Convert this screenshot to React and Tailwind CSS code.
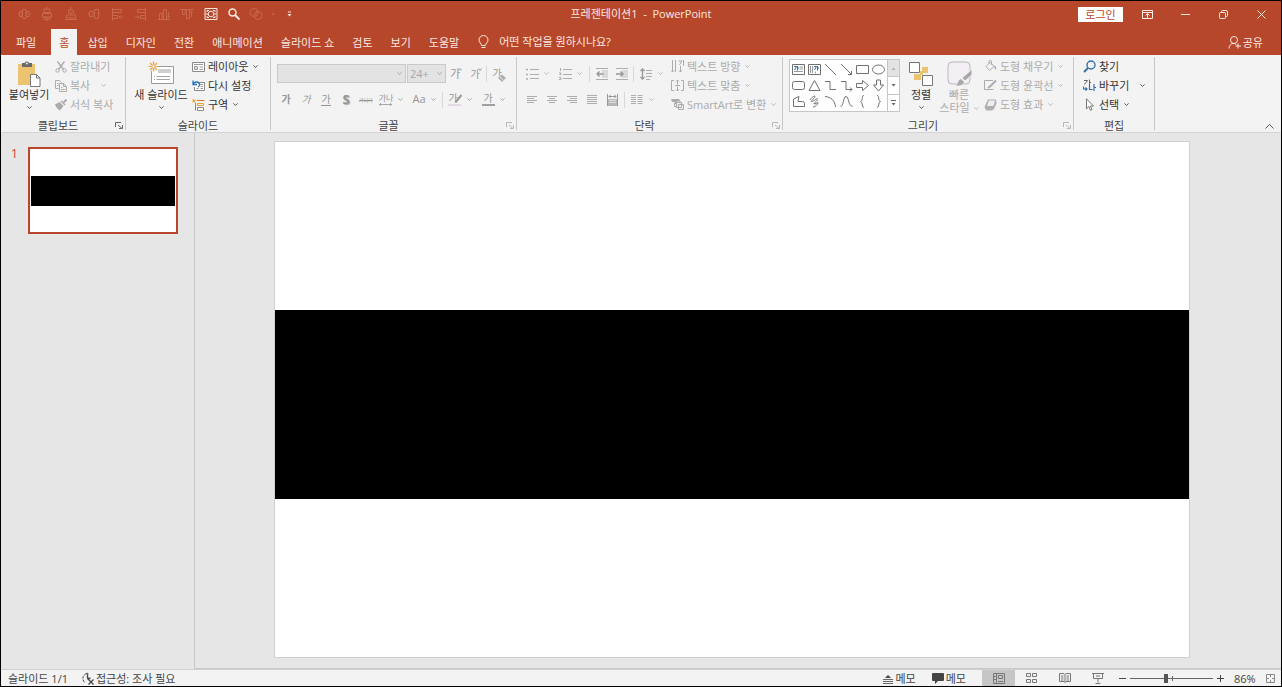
import React from "react";

/* ---------- shared pieces ---------- */

function Icon({ w = 14, h = w, vb, className = "", children }) {
  return (
    <svg
      width={w}
      height={h}
      viewBox={vb || `0 0 ${w} ${h}`}
      fill="none"
      stroke="currentColor"
      strokeWidth="1"
      aria-hidden="true"
      className={`shrink-0 ${className}`}
    >
      {children}
    </svg>
  );
}

const Chevron = ({ className = "" }) => (
  <Icon w={5} h={3} className={className}>
    <path d="M.4.4 2.5 2.4 4.6.4" strokeWidth=".8" />
  </Icon>
);

function Group({ label, launcher, muted, className, children }) {
  return (
    <section aria-label={label} className={`flex shrink-0 flex-col border-r border-[#c8c8c8] ${className}`}>
      <div className="flex h-[62px]">{children}</div>
      <div className="flex h-[11px] items-center">
        <span className="flex-1 pt-px text-center leading-[11px] text-[#444]">{label}</span>
        {launcher && (
          <button
            type="button"
            aria-label={`${label} 옵션`}
            className={`flex w-[10px] justify-start ${muted ? "text-[#b8b8b8]" : "text-[#666]"}`}
          >
            <Icon w={8}>
              <path d="M.5 6V1.500H6M3 4l4 3.500M7.500 4v3.500H4" />
            </Icon>
          </button>
        )}
      </div>
    </section>
  );
}

function Row({ icon, text, arrow, wide, disabled }) {
  return (
    <button
      type="button"
      className={`flex h-[19px] items-center gap-[3px] whitespace-nowrap ${disabled ? "text-[#ababab]" : "text-[#333]"}`}
    >
      {icon}
      <span className="pt-[2px]">{text}</span>
      {arrow && <Chevron className={wide ? "ml-2" : "ml-[2px]"} />}
    </button>
  );
}

function Big({ icon, text, className, children }) {
  return (
    <button type="button" className={`flex flex-col items-center whitespace-nowrap pt-1 ${className}`}>
      <span className="flex h-[26px] items-center">{icon}</span>
      <span className="leading-[16px]">{text}</span>
      {children || <Chevron className="mt-[3px]" />}
    </button>
  );
}

const Tool = ({ label, children }) => (
  <button type="button" aria-label={label} className="flex h-[19px] w-5 shrink-0 items-center justify-center">
    {children}
  </button>
);

const Split = ({ label, children }) => (
  <button type="button" aria-label={label} className="mr-[5px] flex h-[19px] shrink-0 items-center">
    <span className="flex w-5 items-center justify-center">{children}</span>
    <span className="flex w-2 justify-center">
      <Chevron />
    </span>
  </button>
);

const Rule = () => <span className="mr-[2px] h-4 w-px shrink-0 bg-[#d8d8d8]" />;

/* ---------- title bar ---------- */

const quick = [
  ["가운데 맞춤", <path d="M1 7h1.500M5 7h.5M9 7h.5M12 7h2M2.500 4.500h2.500v5H2.500zM5.500 2.500h3.500v9H5.500zM9.500 4.500H12v5H9.500z" />],
  ["중간 맞춤", <path d="M7 0v2M7 5.500v1M7 10v4M4 2h6v3.500H4zM2.500 6.500h9V10h-9zM4 10.500h6v2H4z" />],
  ["세로 가운데", <path d="M7 0v3M4.500 3h5v3h-5zM2.500 8h9v3h-9zM7 6v2M1 12.500h12" />],
  ["가로 가운데", <path d="M1 7h1.500M11.500 7H13M2.500 4.500H6v5H2.500zM7.500 2.500h4v9h-4z" />],
  ["왼쪽 맞춤", <path d="M2.500.500v13M2.500 2.500h9v3h-9zM2.500 8.500h5v3h-5zM9 10h4M10.500 8.500 9 10l1.500 1.500" />],
  ["오른쪽 맞춤", <path d="M11.500.500v13M11.500 2.500h-8v3h8zM11.500 8.500h-5v3h5zM1 10h4M3.500 8.500 5 10l-1.500 1.500" />],
  ["아래쪽 맞춤", <path d="M.500 12.500h13M2.500 6.500h2.500v6H2.500zM6.500 2.500h3v10h-3zM11.500 5v6M10 9.500l1.500 1.500 1.500-1.500" />],
  ["위쪽 맞춤", <path d="M.500 2.500h13M2.500 2.500H5v5H2.500zM6.500 2.500h3v9h-3zM11.500 10V4M10 5.500 11.500 4 13 5.500" />],
];

function TitleBar() {
  return (
    <header className="grid h-7 shrink-0 grid-cols-[1fr_auto_1fr] items-center bg-[#b7472a] pb-[2px] text-[#fbe9e4]">
      <div className="flex items-center pl-4">
        <div className="flex w-[224px] items-center justify-between">
          {quick.map(([name, path]) => (
            <button key={name} type="button" aria-label={name} className="text-[#c8694f]">
              <Icon>{path}</Icon>
            </button>
          ))}
          <button type="button" aria-label="크기 조정">
            <Icon>
              <path d="M1 1.500h12v11H1z" />
              <circle cx="7" cy="7" r="2.800" />
              <path d="M3 5V3.500h2M9 3.500h2V5M11 9v1.500H9M5 10.500H3V9M1.500 7h2.500M10 7h2.500" />
            </Icon>
          </button>
          <button type="button" aria-label="찾기">
            <Icon>
              <circle cx="5.500" cy="5.500" r="3.500" strokeWidth="1.500" />
              <path d="m8 8 4.500 4.500" strokeWidth="2" />
            </Icon>
          </button>
        </div>
        <button type="button" aria-label="도형 병합" className="ml-2 flex items-center gap-2 text-[#c8694f]">
          <Icon>
            <circle cx="5" cy="5.500" r="4" />
            <circle cx="9" cy="8.500" r="4" />
            <path d="M7 5 9 7M5.500 7 8 9.500" />
          </Icon>
          <Icon w={4} h={3}><path d="M0 .500h4L2 2.500z" fill="currentColor" stroke="none" /></Icon>
        </button>
        <button type="button" aria-label="빠른 실행 도구 모음 사용자 지정" className="ml-3">
          <Icon w={5} h={6}>
            <path d="M1 1h3" />
            <path d="M.500 3h4L2.500 5.500z" fill="currentColor" stroke="none" />
          </Icon>
        </button>
      </div>
      <h1 className="whitespace-pre">프레젠테이션1  -  PowerPoint</h1>
      <div className="flex items-center justify-end pr-[15px]">
        <button type="button" className="mr-[19px] h-[15px] w-[45px] bg-white leading-[15px] text-[#b7472a]">
          로그인
        </button>
        <button type="button" aria-label="리본 메뉴 표시 옵션" className="mr-[28px]">
          <Icon w={11} h={9}>
            <path d="M.500.500h10v8H.500zM.500 2.500h10M5.500 8V4M3.500 5.500l2-2 2 2" />
          </Icon>
        </button>
        <button type="button" aria-label="최소화" className="mr-[29px]">
          <Icon w={9} h={9}><path d="M0 4.500h9" /></Icon>
        </button>
        <button type="button" aria-label="이전 크기로 복원" className="mr-[29px]">
          <Icon w={9} h={9}>
            <rect x=".500" y="2.500" width="6" height="6" rx="1" />
            <path d="M2.500 2V1.500a1 1 0 0 1 1-1H7A1.500 1.500 0 0 1 8.500 2v3.500a1 1 0 0 1-1 1H7" />
          </Icon>
        </button>
        <button type="button" aria-label="닫기">
          <Icon w={9} h={9}><path d="m.5.5 8 8M8.500.500l-8 8" /></Icon>
        </button>
      </div>
    </header>
  );
}

/* ---------- ribbon tabs ---------- */

function Tabs() {
  const tab = "h-[26px] px-2 leading-[25px] whitespace-nowrap";
  return (
    <nav className="flex h-[26px] shrink-0 items-stretch gap-[2px] bg-[#b7472a] pl-[7px] pr-[18px] text-[#fbe9e4]">
      <button type="button" className={`${tab} mr-[5px]`}>파일</button>
      <button type="button" aria-current="page" className={`${tab} bg-[#f3f3f3] text-[#b7472a]`}>홈</button>
      {["삽입", "디자인", "전환", "애니메이션", "슬라이드 쇼", "검토", "보기", "도움말"].map((t) => (
        <button key={t} type="button" className={tab}>{t}</button>
      ))}
      <button type="button" className="ml-[9px] flex items-center gap-[10px] whitespace-nowrap">
        <Icon w={11} h={14}>
          <path d="M3.500 10.500C3.500 8.500 1 7.500 1 5a4.500 4.500 0 0 1 9 0c0 2.500-2.500 3.500-2.500 5.500zM3.500 12.500h4" />
        </Icon>
        <span>어떤 작업을 원하시나요?</span>
      </button>
      <button type="button" className="ml-auto flex items-center gap-[2px] whitespace-nowrap">
        <Icon w={13} h={13}>
          <circle cx="6" cy="4" r="3.500" />
          <path d="M1 12.500C1 9.500 3 7.800 5 7.500c1.500 0 2.500.2 3 1M10 7.500v5M7.500 10H13" />
        </Icon>
        <span className="pt-[2px]">공유</span>
      </button>
    </nav>
  );
}

/* ---------- ribbon groups ---------- */

function Clipboard() {
  return (
    <Group label="클립보드" launcher className="w-[125px]">
      <Big
        className="ml-2 w-10 text-[#333]"
        text="붙여넣기"
        icon={
          <Icon w={24} h={26}>
            <path d="M1 3h17v21H1z" fill="#ecc471" stroke="none" />
            <path d="M5 2h2.500a2.500 2.500 0 0 1 4.500 0H15v4H5z" fill="#6a6a6a" stroke="none" />
            <circle cx="9.800" cy="2.500" r="1" fill="#f3f3f3" stroke="none" />
            <path d="M13.500 13.500h6l3.500 3.500v8.500h-9.500zM19.500 13.500V17H23" fill="#fff" stroke="#777" />
          </Icon>
        }
      />
      <div className="ml-[6px] flex flex-col">
        <Row disabled text="잘라내기" icon={
          <Icon w={12}>
            <path d="M2.500.500 8.500 8.500M9.500.500 3.500 8.500" strokeWidth="1.300" />
            <circle cx="2.500" cy="9.500" r="1.700" /><circle cx="9.500" cy="9.500" r="1.700" />
          </Icon>} />
        <Row disabled arrow wide text="복사" icon={
          <Icon w={12}>
            <path d="M3.500 8.500h-3v-8h4l2 2M4.500 3.500h4l3 3v5h-7zM8.500 3.500v3h3M6 7.500h1.500M6 9.500h4M2 3.500h1.500M2 5.500h1.500" />
          </Icon>} />
        <Row disabled text="서식 복사" icon={
          <Icon w={12}>
            <path d="M0 5.500 4.500 3 8.500 7 5 11.500C3 10.500 1 8.500 0 5.500z" fill="currentColor" stroke="none" />
            <path d="M5 2.500 9.500 7" stroke="#f3f3f3" />
            <path d="M6 2 10 6" strokeWidth="1.500" />
            <path d="M8.500 3.500 11.500.500" strokeWidth="2" />
          </Icon>} />
      </div>
    </Group>
  );
}

function Slides() {
  return (
    <Group label="슬라이드" className="w-[145px]">
      <Big
        className="ml-[7px] w-[56px] text-[#333]"
        text="새 슬라이드"
        icon={
          <Icon w={26} h={26}>
            <path d="M3.500 5.500h22v17h-22z" fill="#fff" stroke="#9a9a9a" />
            <path d="M10 8h13v4H10z" fill="#cfcfcf" stroke="none" />
            <path d="M6 15.500h1M8.500 15.500H22M6 18.500h1M8.500 18.500H22" stroke="#a5a5a5" />
            <circle cx="5.500" cy="5.500" r="5" fill="#f3f3f3" stroke="none" />
            <path d="M5.500.500v3M5.500 7.500v3M.500 5.500h3M7.500 5.500h3M2 2l2 2M7 7l2 2M9 2 7 4M4 7 2 9" stroke="#e8a33d" strokeWidth="1.200" />
            <circle cx="5.500" cy="5.500" r="1.700" stroke="#e8a33d" fill="#fff" />
          </Icon>
        }
      />
      <div className="ml-[3px] flex flex-col">
        <Row arrow text="레이아웃" icon={
          <Icon w={13} h={12}>
            <path d="M.500 1.500h12v9H.500z" fill="#fff" stroke="#8a8a8a" />
            <path d="M2 3.500h9M7.500 6h3.500M7.500 8.500h3.500" stroke="#9a9a9a" />
            <path d="M2.500 5.500h3v3h-3z" stroke="#9a9a9a" fill="#ddd" />
          </Icon>} />
        <Row text="다시 설정" icon={
          <Icon w={13} h={12}>
            <path d="M5.500 2.500h7v8h-10V7" fill="#fff" stroke="#8a8a8a" />
            <path d="M8 4.500h3M8.500 6.500H11M8.500 8.500H11M4.500 8.500h2" stroke="#9a9a9a" />
            <path d="M1 .500v4h4M1 4.500c1-3 5.500-3.500 6.500-.5.300 1.500-.500 2.500-1.500 3" stroke="#2b74b8" strokeWidth="1.300" />
          </Icon>} />
        <Row arrow text="구역" icon={
          <Icon w={13} h={12}>
            <path d="M0 2h4M2 0v4M.500.500l3 3M3.500.500l-3 3" stroke="#e8a33d" strokeWidth=".8" />
            <path d="M5 1.500h7.500" stroke="#d9792b" />
            <path d="M5.500 4.500h6v2h-6z" stroke="#e8a33d" fill="#fdf0dc" />
            <path d="M3.500 4v7.500M5.500 8.500h6v3h-6z" stroke="#888" fill="#fff" />
          </Icon>} />
      </div>
    </Group>
  );
}

const ga = "text-[10px] leading-[11px]";

function Fonts() {
  const box = "h-[19px] w-full appearance-none border border-[#c9c9c9] bg-[#e3e3e3] pl-[2px] text-[11px] leading-[16px] text-[#a6a6a6]";
  return (
    <Group label="글꼴" launcher muted className="w-[246px]">
      <div className="flex flex-col gap-[7px] pl-[5px] pt-[7px] text-[#969696]">
        <div className="flex items-center pl-px">
          <span className="relative mr-px w-[129px]">
            <select aria-label="글꼴" disabled className={box}><option></option></select>
            <Chevron className="absolute right-[4px] top-2" />
          </span>
          <span className="relative w-[39px]">
            <select aria-label="글꼴 크기" disabled className={box}><option>24+</option></select>
            <Chevron className="absolute right-[4px] top-2" />
          </span>
          <Tool label="글꼴 크기 크게">
            <span className="text-[11px] leading-[12px]">가</span>
            <Icon w={4} h={3} className="-ml-[2px] mb-2"><path d="M.5 2.500 2 .500l1.500 2" /></Icon>
          </Tool>
          <Tool label="글꼴 크기 작게">
            <span className="text-[10px] leading-[12px]">가</span>
            <Icon w={4} h={3} className="-ml-[2px] mb-2"><path d="m.5 .500 1.500 2 1.500-2" /></Icon>
          </Tool>
          <Rule />
          <Tool label="서식 지우기">
            <span className={ga}>가</span>
            <Icon w={8} className="-ml-[4px] mt-2">
              <path d="M0 4 4 .500 8 4 4 8z" fill="#b0b0b0" stroke="none" />
              <path d="M1.500 2.500 5.500 6.500" stroke="#f3f3f3" strokeWidth=".8" />
            </Icon>
          </Tool>
        </div>
        <div className="flex items-center">
          <Tool label="굵게"><b className={ga}>가</b></Tool>
          <Tool label="기울임꼴"><i className={ga}>가</i></Tool>
          <Tool label="밑줄"><span className={`${ga} border-b border-current`}>가</span></Tool>
          <Tool label="텍스트 그림자"><b className="text-[13px] leading-[13px] [text-shadow:1px_1px_1px_#aaa]">S</b></Tool>
          <Tool label="취소선"><span className="text-[5px] leading-[8px] line-through">가나다</span></Tool>
          <Split label="문자 간격">
            <span className="flex flex-col items-center">
              <span className="text-[8px] leading-[10px]">가나</span>
              <Icon w={13} h={3}><path d="M0 1.500h13M2 0 .500 1.500 2 3M11 0l1.500 1.500L11 3" strokeWidth=".8" /></Icon>
            </span>
          </Split>
          <Split label="대/소문자 바꾸기"><span className="text-[11px]">Aa</span></Split>
          <Rule />
          <Split label="텍스트 강조 색">
            <span className="flex flex-col items-center">
              <span className="flex items-center">
                <span className={ga}>가</span>
                <Icon w={7} h={9} className="-ml-[3px]"><path d="M6.500 1 2 6.500.500 8" strokeWidth="2" /></Icon>
              </span>
              <span className="h-[2px] w-[13px] bg-[#e3dbe3]" />
            </span>
          </Split>
          <Split label="글꼴 색">
            <span className="flex flex-col items-center">
              <span className={ga}>가</span>
              <span className="h-[2px] w-[13px] bg-[#a0a0a0]" />
            </span>
          </Split>
        </div>
      </div>
    </Group>
  );
}

const lines = (d) => <Icon w={12} h={10}><path d={d} /></Icon>;

function Paragraph() {
  return (
    <Group label="단락" launcher muted className="w-[266px]">
      <div className="flex flex-col gap-[7px] pl-[5px] pt-[7px] text-[#adadad]">
        <div className="flex items-center">
          <Split label="글머리 기호">
            <Icon w={13} h={12}><path d="M0 1.500h2M0 6.500h2M0 11h2" strokeWidth="1.500" /><path d="M4 1.500h9M4 6.500h9M4 10.500h9" /></Icon>
          </Split>
          <Split label="번호 매기기">
            <Icon w={13} h={12}><path d="M1.500 0v3M0 5h2v1.500H.5M0 9.500h2v2H0M4 1.500h9M4 6.500h9M4 10.500h9" /></Icon>
          </Split>
          <span className="w-px" />
          <Rule />
          <Tool label="목록 수준 줄임">
            <Icon w={12} h={12}>
              <path d="M0 .500h12M0 11.500h12" />
              <path d="M6 2h6v8H6z" fill="#d9d9d9" stroke="none" />
              <path d="M7.500 6H1M3.500 3.500 1 6l2.500 2.500" stroke="#999" strokeWidth="1.500" />
            </Icon>
          </Tool>
          <Tool label="목록 수준 늘림">
            <Icon w={12} h={12}>
              <path d="M0 .500h12M0 11.500h12" />
              <path d="M6 2h6v8H6z" fill="#d9d9d9" stroke="none" />
              <path d="M0 6h6.500M4.500 3.500 7 6 4.500 8.500" stroke="#999" strokeWidth="1.500" />
            </Icon>
          </Tool>
          <span className="w-px" />
          <Rule />
          <Split label="줄 간격">
            <Icon w={12} h={12}><path d="M2.500 1v10M.500 3l2-2 2 2M.500 9l2 2 2-2" stroke="#999" strokeWidth="1.300" /><path d="M6 2.500h6M6 5.500h6M6 8.500h6M6 11.500h4" /></Icon>
          </Split>
        </div>
        <div className="flex items-center">
          <Tool label="왼쪽 맞춤">{lines("M1 1.500h10M1 3.500h7M1 5.500h10M1 7.500h7")}</Tool>
          <Tool label="가운데 맞춤">{lines("M1 1.500h10M3 3.500h6M1 5.500h10M3 7.500h6")}</Tool>
          <Tool label="오른쪽 맞춤">{lines("M1 1.500h10M4 3.500h7M1 5.500h10M4 7.500h7")}</Tool>
          <Tool label="양쪽 맞춤">{lines("M1 .500h10M1 2.500h10M1 4.500h10M1 6.500h10M1 8.500h10")}</Tool>
          <Tool label="균등 분할">
            <Icon w={13} h={12}>
              <path d="M1 5h11v7H1z" fill="#b8b8b8" stroke="none" />
              <path d="M1.500 0v12M11.500 0v12M3 2.500h7M4.500 1 3 2.500 4.500 4M8.500 1 10 2.500 8.500 4" stroke="#999" />
              <path d="M3 6.500h7M3 8.500h7" stroke="#ddd" />
            </Icon>
          </Tool>
          <span className="w-[2px]" />
          <Rule />
          <Split label="열">
            {lines("M0 .500h5M0 2.500h5M0 4.500h5M0 6.500h5M0 8.500h5M6.500 .500h5M6.500 2.500h5M6.500 4.500h5M6.500 6.500h5M6.500 8.500h5")}
          </Split>
        </div>
      </div>
      <div className="ml-[2px] flex flex-col items-start">
        <Row disabled arrow text="텍스트 방향" icon={
          <Icon w={13}><path d="M1.500 0v12M4.500 0v12M0 10.500 1.500 12 3 10.500M9.500 6v6M8 10.500 9.500 12 11 10.500M7.500 1h3.500L8.500 5M12.500 0v6" /></Icon>} />
        <Row disabled arrow text="텍스트 맞춤" icon={
          <Icon w={13}><path d="M3 1.500H.500v10H3M10 1.500h2.500v10H10M4 6.500h5M6.500 1v4.500M5 2.500 6.500 1 8 2.500M6.500 7.500V12M5 10.500 6.500 12 8 10.500" /></Icon>} />
        <Row disabled arrow text="SmartArt로 변환" icon={
          <Icon w={13}><path d="M0 1h8l2 2.500H6V6H3L4 4H1z" fill="currentColor" stroke="none" /><path d="M3.500 5v3.500H5M5.500 4.500h5v5h-5zM7.500 6.500h5v5h-5z" fill="#eee" /></Icon>} />
      </div>
    </Group>
  );
}

const shapes = [
  ["텍스트 상자", <><path d="M.500 1.500h12v10H.500z" /><path d="M7.500 4h3.500M7.500 6h3.500M2 8.500h9" stroke="#999" /><path d="M2 3.500h2.500L2.500 7M5.500 3v4.500M5.500 5H7" stroke="#2f6fae" /></>],
  ["세로 텍스트 상자", <><path d="M.500 1.500h12v10H.500z" /><path d="M2.500 3v7M4.500 3v7M7.500 8.500v2" stroke="#999" /><path d="M6 3.500h2.500L6.500 7M9.500 3v4.500M9.500 5H11" stroke="#2f6fae" /></>],
  ["선", <path d="m1 1 11 11" />],
  ["화살표", <path d="m1 1 10.500 10.500M11.500 8v3.500H8" />],
  ["직사각형", <path d="M.500 2.500h12v8H.500z" />],
  ["타원", <ellipse cx="6.500" cy="6.500" rx="6" ry="4.500" />],
  ["둥근 직사각형", <rect x=".500" y="2.500" width="12" height="8" rx="2" />],
  ["삼각형", <path d="M6.500 1.500 12 11.500H1z" />],
  ["꺾인 연결선", <path d="M1 2.500h5v8h6" />],
  ["꺾인 화살표 연결선", <path d="M1 2.500h5v8h6M10 8.500l2 2-2 2" />],
  ["오른쪽 화살표", <path d="M.500 4.500h6v-3l6 5-6 5v-3h-6z" />],
  ["아래쪽 화살표", <path d="M4.500 1v5h-3l5 6 5-6h-3V1z" />],
  ["자유형", <path d="M1.500 4 7 1.500 6 6.500h4.500a2 2 0 0 1 2 2v3H1.500z" />],
  ["자유 곡선", <path d="M2 5C3 3 6 .5 7 1.500S2 6 3.500 6.500 9 2.500 9.500 4 5 8.500 6 9s4-2.500 4-1-3 4-5 4" />],
  ["호", <path d="M1 1.500c6 .5 10 4 10.500 10.500" />],
  ["곡선", <path d="M.500 11.500C4 11 3 1.500 6 1.500s2 9.500 6.500 10" />],
  ["왼쪽 중괄호", <path d="M8 .500C5 .500 7.500 6 4.500 6.500 7.500 7 5 12.500 8 12.500" />],
  ["오른쪽 중괄호", <path d="M5 .500C8 .500 5.500 6 8.500 6.500 5.500 7 8 12.500 5 12.500" />],
];

function Drawing() {
  return (
    <Group label="그리기" launcher muted className="w-[291px]">
      <div className="ml-[6px] mt-[2px] flex h-[53px] w-[111px] border border-[#c6c6c6] bg-white">
        <div className="grid flex-1 grid-cols-6 py-[1px] text-[#707070]">
          {shapes.map(([name, d]) => (
            <button key={name} type="button" aria-label={name} className="flex items-center justify-center">
              <Icon w={13}>{d}</Icon>
            </button>
          ))}
        </div>
        <div className="flex w-3 flex-col border-l border-[#c6c6c6] text-[#666]">
          <button type="button" aria-label="위로" className="flex flex-1 items-center justify-center bg-[#e3e3e3] text-[#b0b0b0]">
            <Icon w={5} h={3}><path d="M.5 3h4L2.500.500z" fill="currentColor" stroke="none" /></Icon>
          </button>
          <button type="button" aria-label="아래로" className="flex flex-1 items-center justify-center border-y border-[#c6c6c6]">
            <Icon w={5} h={3}><path d="M.5 0h4L2.500 2.500z" fill="currentColor" stroke="none" /></Icon>
          </button>
          <button type="button" aria-label="자세히" className="flex flex-1 items-center justify-center">
            <Icon w={5} h={6}><path d="M0 .500h5" /><path d="M.5 3h4L2.500 5.500z" fill="currentColor" stroke="none" /></Icon>
          </button>
        </div>
      </div>
      <Big
        className="ml-[5px] w-8 text-[#333]"
        text="정렬"
        icon={
          <Icon w={24} h={24}>
            <path d="M13 5h6v6h-6zM5 12h7v6H5zM11 9h3v4h-3z" fill="#ecc471" stroke="none" />
            <path d="M.500.500h10v10H.500zM13.500 13.500h10v10h-10z" fill="#fff" stroke="#777" />
          </Icon>
        }
      />
      <Big
        className="ml-[2px] w-10 text-[#ababab]"
        text="빠른"
        icon={
          <Icon w={25} h={26}>
            <rect x="1" y="1" width="22" height="22" rx="4" fill="#f3eef4" stroke="#bdb4bf" />
            <path d="M25 8v6l-7 6-3-3z" fill="#a8a8a8" stroke="#f3f3f3" />
            <path d="M14 17.500 17.500 21c-1 3.500-5 4.500-9.500 4 2.500-1.500 2.500-6.500 6-7.500z" fill="#a8a8a8" stroke="#f3f3f3" />
          </Icon>
        }
      >
        <span className="flex items-center gap-1 leading-[10px]">
          스타일 <Chevron />
        </span>
      </Big>
      <div className="ml-[5px] flex flex-col items-start">
        <Row disabled arrow text="도형 채우기" icon={
          <Icon w={13}><path d="M2 6.500 6.500 2 10 6.500l-4.500 4-3.500-4zM5 4V1.500a1.200 1.200 0 0 1 2.400 0V5" /><path d="M10.500 5c1.500 1 2 3 1.500 5-1.500-1-2-3-1.500-5z" fill="currentColor" stroke="none" /></Icon>} />
        <Row disabled arrow text="도형 윤곽선" icon={
          <Icon w={13}><path d="M9 1.500H.500v9h9" /><path d="M12 1.500 6 7.500 4 9" strokeWidth="2" /></Icon>} />
        <Row disabled arrow text="도형 효과" icon={
          <Icon w={13}><path d="M4 1.500h8l.5 4-2.500 5.500-2 1.500H2L.500 9z" fill="#b0b0b0" stroke="none" /><path d="M5 2.500h6l-1.500 5.500H3z" fill="#eee" stroke="none" /></Icon>} />
      </div>
    </Group>
  );
}

function Editing() {
  return (
    <Group label="편집" className="w-[81px]">
      <div className="ml-[9px] flex flex-col items-start">
        <Row text="찾기" icon={
          <Icon w={13} className="text-[#2f6fae]"><circle cx="8" cy="5" r="4" strokeWidth="1.400" /><path d="M5 8 1 12" strokeWidth="1.800" /></Icon>} />
        <Row arrow wide text="바꾸기" icon={
          <Icon w={13}>
            <path d="M1 1.500h3.500L1.500 5.500M6.500.500v6M6.500 3.500H8" stroke="#666" />
            <path d="M.500 7.500v2.500H4M2.500 8.500 4 10 2.500 11.500M6.500 6v4.500h3M11 5v7M11 8.500h2" stroke="#2f6fae" strokeWidth="1.200" />
          </Icon>} />
        <Row arrow text="선택" icon={
          <Icon w={13}><path d="M3.500.800v10l2.300-2.200 1.700 3.700 1.500-.700-1.600-3.600h3.100z" fill="#fff" stroke="#777" /></Icon>} />
      </div>
    </Group>
  );
}

/* ---------- slide content ---------- */

function SlideArt() {
  return (
    <>
      <div className="flex-[168] bg-white" />
      <div className="flex-[189] bg-black" />
      <div className="flex-[158] bg-white" />
    </>
  );
}

function StatusBar() {
  const view = "flex h-4 w-[33px] items-center justify-center";
  return (
    <footer className="flex h-[17px] shrink-0 items-center border-t border-[#d0d0d0] bg-[#f3f3f3] text-[#444]">
      <button type="button" className="ml-[7px] pt-px leading-4">슬라이드 1/1</button>
      <button type="button" className="ml-[14px] flex items-center gap-px pt-px leading-4">
        <Icon w={13} h={13}>
          <path d="M5 1.500A5 5 0 0 0 3 10.500" strokeDasharray="3 1" />
          <path d="M5.500 3v3l3 .5M5.500 6.500l6 6M11.500 7.500l-5 5" strokeWidth="1.300" />
          <circle cx="5.500" cy="2" r=".700" />
        </Icon>
        <span>접근성: 조사 필요</span>
      </button>
      <div className="ml-auto flex items-center pr-[6px]">
        <button type="button" className="flex items-center gap-[3px] pt-px leading-4">
          <Icon w={10}><path d="M2 4h6L5 1z" fill="currentColor" stroke="none" /><path d="M0 5.500h10M0 7.500h10M0 9.500h10" strokeWidth=".8" /></Icon>
          메모
        </button>
        <button type="button" className="ml-4 flex items-center gap-[2px] pt-px leading-4">
          <Icon w={12} h={11}><path d="M1 0h10a1 1 0 0 1 1 1v6a1 1 0 0 1-1 1H6l-3 3V8H1a1 1 0 0 1-1-1V1a1 1 0 0 1 1-1z" fill="currentColor" stroke="none" /></Icon>
          메모
        </button>
        <div className="ml-4 flex text-[#777]">
          <button type="button" aria-label="기본" className={`${view} bg-[#c6c6c6]`}>
            <Icon w={12} h={11}><path d="M.500.500h11v10H.500zM3.500.500v10M5.500 2.500h4v3h-4zM5 8.500h5M1 3.500h2M1 6.500h2" /></Icon>
          </button>
          <button type="button" aria-label="여러 슬라이드" className={view}>
            <Icon w={11} h={10}><path d="M.500.500h4v3h-4zM6.500.500h4v3h-4zM.500 6.500h4v3h-4zM6.500 6.500h4v3h-4z" /></Icon>
          </button>
          <button type="button" aria-label="읽기용 보기" className={view}>
            <Icon w={12} h={10}><path d="M.500.500h4.500l1 1 1-1h4.500v8H7l-1 1-1-1H.500zM6 1.500v8M2 3h2.500M2 5h2.500M2 7h2.500M7.500 3H10M7.500 5H10M7.500 7H10" /></Icon>
          </button>
          <button type="button" aria-label="슬라이드 쇼" className={view}>
            <Icon w={12} h={11}><path d="M0 .500h12M1.500.500v5h9v-5M6 5.500v4M3.500 10.500h5M4 3h4" /></Icon>
          </button>
        </div>
        <button type="button" aria-label="축소" className="ml-[5px]"><Icon w={7}><path d="M0 3.500h7" /></Icon></button>
        <span className="relative mx-1 flex w-[83px] items-center">
          <input
            type="range"
            aria-label="확대/축소"
            min="0"
            max="100"
            defaultValue="43"
            className="h-[9px] w-full appearance-none bg-transparent [&::-webkit-slider-runnable-track]:h-px [&::-webkit-slider-runnable-track]:bg-[#666] [&::-webkit-slider-thumb]:-mt-1 [&::-webkit-slider-thumb]:h-[9px] [&::-webkit-slider-thumb]:w-1 [&::-webkit-slider-thumb]:appearance-none [&::-webkit-slider-thumb]:bg-[#555]"
          />
          <span className="pointer-events-none absolute left-1/2 top-[2px] h-[5px] w-px bg-[#666]" />
        </span>
        <button type="button" aria-label="확대"><Icon w={7}><path d="M0 3.500h7M3.500 0v7" /></Icon></button>
        <button type="button" className="ml-[10px] w-[21px] pt-px leading-4">86%</button>
        <button type="button" aria-label="창에 맞춤" className="ml-[11px] text-[#888]">
          <Icon w={9}><path d="M.500.500h8v8h-8z" /><path d="M4.500 1v2M4.500 6v2M1 4.500h2M6 4.500h2" /></Icon>
        </button>
      </div>
    </footer>
  );
}

export default function App() {
  return (
    <div className="flex min-h-screen flex-col border border-black bg-[#e6e6e6] text-[11px] font-[Open_Sans,Noto_Sans_CJK_KR,sans-serif]">
      <TitleBar />
      <Tabs />
      <div className="flex shrink-0 border-b border-[#d4d4d4] bg-[#f3f3f3] py-[2px]">
        <Clipboard />
        <Slides />
        <Fonts />
        <Paragraph />
        <Drawing />
        <Editing />
        <button type="button" aria-label="리본 메뉴 축소" className="ml-auto mr-[7px] self-end pb-[1px] text-[#555]">
          <Icon w={9} h={5}><path d="m.5 4.500 4-4 4 4" /></Icon>
        </button>
      </div>
      <main className="flex flex-1">
        <aside className="w-[194px] shrink-0 border-r border-[#c8c8c8] pl-[10px] pt-[14px]">
          <button type="button" aria-label="슬라이드 1" className="flex items-start text-left">
            <span className="w-[17px] text-[12px] leading-[14px] text-[#d0432b]">1</span>
            <span className="flex h-[87px] w-[150px] flex-col border-2 border-[#b7472a] bg-white p-px">
              <SlideArt />
            </span>
          </button>
        </aside>
        <div className="flex-1 border-b border-[#c8c8c8] pb-[10px] pl-[79px] pr-[91px] pt-2">
          <div className="flex aspect-[916/517] flex-col border border-[#d0d0d0]">
            <SlideArt />
          </div>
        </div>
      </main>
      <StatusBar />
    </div>
  );
}
